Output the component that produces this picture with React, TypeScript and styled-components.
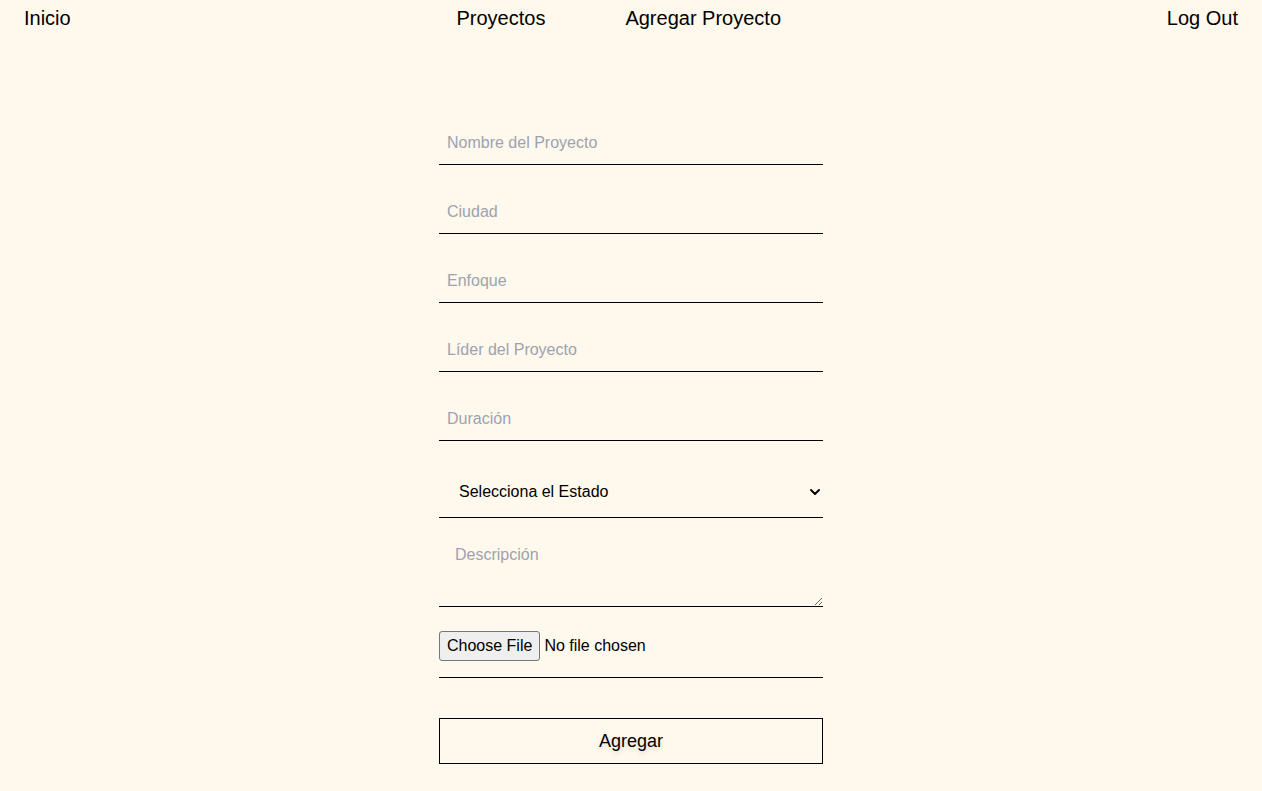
import React from "react"
import styled, { createGlobalStyle } from "styled-components"

const GlobalStyle = createGlobalStyle`
  body {
    margin: 0;
    background: #fff8ec;
    font-family: "Liberation Sans", Arial, sans-serif;
    color: #000;
  }
  * {
    box-sizing: border-box;
  }
`

const Nav = styled.nav`
  display: flex;
  justify-content: space-between;
  align-items: center;
  padding: 6px 24px;
  font-size: 20px;
  line-height: 24px;
`

const NavGroup = styled.div`
  display: flex;
  gap: 80px;
`

const NavLink = styled.a`
  color: #000;
  text-decoration: none;
  cursor: pointer;
`

const Form = styled.form`
  width: 384px;
  margin: 80px auto 0;
  display: flex;
  flex-direction: column;
  gap: 20px;
  padding-bottom: 28px;
`

const fieldBase = `
  width: 100%;
  border: none;
  border-bottom: 1px solid #000;
  background: transparent;
  font-family: "Liberation Sans", Arial, sans-serif;
  font-size: 16px;
  color: #000;
  outline: none;
  &::placeholder {
    color: #9ca3af;
  }
`

const TextInput = styled.input`
  ${fieldBase}
  height: 49px;
  padding: 6px 8px 0;
`

const SelectWrap = styled.div`
  position: relative;
`

const Select = styled.select`
  ${fieldBase}
  height: 57px;
  padding: 4px 20px 0;
  appearance: none;
  -webkit-appearance: none;
  border-radius: 0;
`

const Chevron = styled.svg`
  position: absolute;
  right: 2px;
  top: 26px;
  pointer-events: none;
`

const TextArea = styled.textarea`
  ${fieldBase}
  height: 69px;
  padding: 7px 16px;
  line-height: 20px;
  resize: vertical;
  display: block;
`

const FileRow = styled.div`
  height: 51px;
  padding-top: 4px;
  border-bottom: 1px solid #000;
`

const FileInput = styled.input`
  font-family: "Liberation Sans", Arial, sans-serif;
  font-size: 16px;
  color: #000;
  &::file-selector-button {
    font-family: "Liberation Sans", Arial, sans-serif;
    font-size: 16px;
    color: #000;
    height: 30px;
    padding: 0 7px;
    margin-right: 4px;
    background: #efefef;
    border: 1px solid #767676;
    border-radius: 3px;
  }
`

const SubmitButton = styled.button`
  margin-top: 20px;
  height: 46px;
  width: 100%;
  background: transparent;
  border: 1px solid #000;
  font-family: "Liberation Sans", Arial, sans-serif;
  font-size: 18px;
  color: #000;
  text-shadow: 0 3px 5px rgba(0, 0, 0, 0.12);
  cursor: pointer;
`

const fields = [
  "Nombre del Proyecto",
  "Ciudad",
  "Enfoque",
  "Líder del Proyecto",
  "Duración",
]

export default function App() {
  return (
    <>
      <GlobalStyle />
      <Nav>
        <NavLink>Inicio</NavLink>
        <NavGroup>
          <NavLink>Proyectos</NavLink>
          <NavLink>Agregar Proyecto</NavLink>
        </NavGroup>
        <NavLink>Log Out</NavLink>
      </Nav>
      <Form onSubmit={e => e.preventDefault()}>
        {fields.map(f => (
          <TextInput key={f} type='text' placeholder={f} />
        ))}
        <SelectWrap>
          <Select defaultValue=''>
            <option value='' disabled>
              Selecciona el Estado
            </option>
            <option value='activo'>Activo</option>
            <option value='inactivo'>Inactivo</option>
          </Select>
          <Chevron width='12' height='10' viewBox='0 0 12 10'>
            <path
              d='M2 3 L6 7 L10 3'
              fill='none'
              stroke='#000'
              strokeWidth='2'
              strokeLinecap='round'
              strokeLinejoin='round'
            />
          </Chevron>
        </SelectWrap>
        <TextArea placeholder='Descripción' />
        <FileRow>
          <FileInput type='file' />
        </FileRow>
        <SubmitButton type='submit'>Agregar</SubmitButton>
      </Form>
    </>
  )
}
